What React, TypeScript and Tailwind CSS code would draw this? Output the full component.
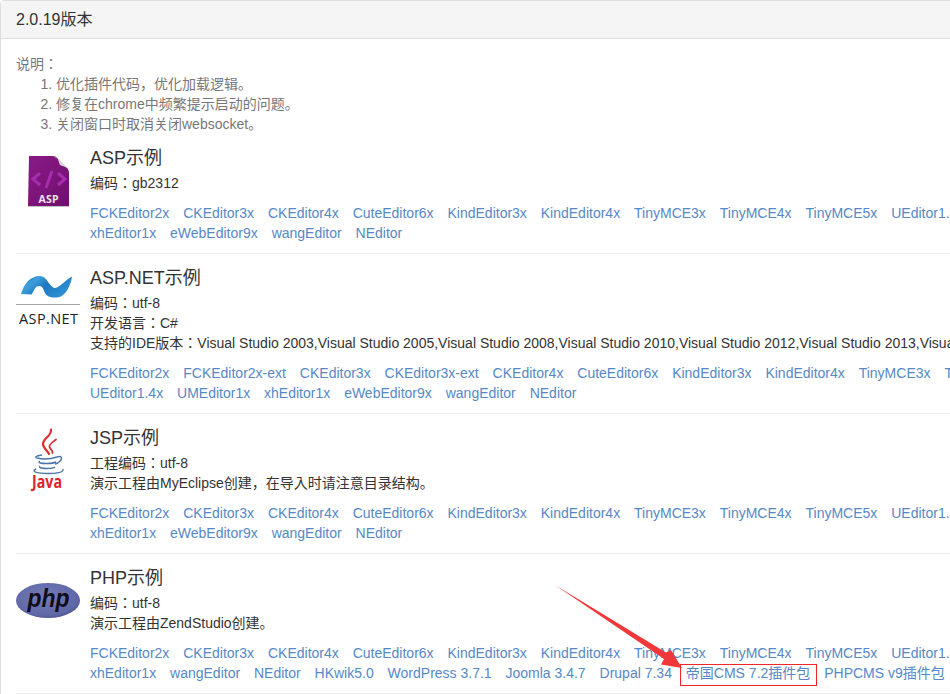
const base = ["FCKEditor2x", "CKEditor3x", "CKEditor4x", "CuteEditor6x", "KindEditor3x", "KindEditor4x", "TinyMCE3x", "TinyMCE4x", "TinyMCE5x", "UEditor1.4x"];

function AspLogo() {
  return (
    <svg viewBox="0 0 64 64" className="w-16 h-16">
      <defs>
        <linearGradient id="asp-bg" x1="0" y1="0" x2="1" y2="1">
          <stop offset="0" stopColor="#8a1a86" />
          <stop offset="1" stopColor="#6f0f6e" />
        </linearGradient>
      </defs>
      <path d="M12.500 57.500 L53.500 57.500 L53 59 L12 59 Z" fill="#c4c4c4" />
      <path d="M13 8 H37 C40 8 42 10 42.500 12 C43 15 44 16 46 17 C49 18 53 20 53 25 V58 H12 Z" fill="url(#asp-bg)" />
      <path d="M37 8 C41 9 46 13 52 21 C49 18 46 18 44 17 C43 15 43 12 42 11 Z" fill="#dcd6dc" />
      <path d="M24 25 L17 31 L24 37 M42 25 L49 31 L42 37" fill="none" stroke="#a62dac" strokeWidth="3" />
      <path d="M36 23 L30 40" fill="none" stroke="#a62dac" strokeWidth="3" />
      <text x="32.500" y="55" textAnchor="middle" fontFamily="'Open Sans', sans-serif" fontWeight="700" fontSize="10.500" fill="#efe3ef" textLength="20">ASP</text>
    </svg>
  );
}

function DotNetLogo() {
  return (
    <svg viewBox="0 0 64 64" className="w-16 h-16">
      <defs>
        <linearGradient id="net-bg" x1="0" y1="0" x2="1" y2="0.5">
          <stop offset="0" stopColor="#1a6fb5" />
          <stop offset="0.3" stopColor="#3f9fdc" />
          <stop offset="0.55" stopColor="#1c78c0" />
          <stop offset="1" stopColor="#2f8fd2" />
        </linearGradient>
      </defs>
      <path d="M5 26 C8 16 14 8 24 8 C31 8 32 17 38 20 C44 20 49 12 56 8.500 C55 16 50 29 41 29.500 C34 30 30 28 28.500 24 C27 20 26 18 23 18 C19 18 18 23 15.500 26.500 Z" fill="url(#net-bg)" />
      <rect x="0" y="36" width="64" height="1" fill="#a8a8a8" />
      <text x="32.500" y="56" textAnchor="middle" fontFamily="'Open Sans', sans-serif" fontSize="14.500" fill="#222" textLength="59">ASP.NET</text>
    </svg>
  );
}

function JavaLogo() {
  return (
    <svg viewBox="0 0 64 64" className="w-16 h-16">
      <g fill="none" stroke="#dc2f33" strokeLinecap="round">
        <path d="M35 1.500 C36 8 27 10 27 16 C27 20 31 22 33 26" strokeWidth="2.200" />
        <path d="M40 11.500 C37 14 33 16 33.500 19 C34 21 37 22 36.500 25" strokeWidth="1.800" />
      </g>
      <g fill="none" stroke="#4a76ad" strokeWidth="1.400">
        <path d="M26 27 C20 28 18 29 21 30 C27 31.500 35 31 41 29" />
        <path d="M24 33 C21 35 25 35.500 31 35.500 C35 35.500 38 35 40 34" />
        <path d="M24 38 C22 40 27 40.500 31 40.500 C35 40.500 38 40 39 39" />
        <path d="M41 29 C46 27 47 31 43 34 C42 35 40 36 39 36" />
        <path d="M20 41 C14 44 23 45.500 32 45.500 C40 45.500 48 44.500 47 41" />
      </g>
      <text x="31" y="60" textAnchor="middle" fontFamily="'Open Sans', sans-serif" fontWeight="700" fontSize="18" fill="#d8262c" textLength="30" lengthAdjust="spacingAndGlyphs">Java</text>
    </svg>
  );
}

function PhpLogo() {
  return (
    <svg viewBox="0 0 64 64" className="w-16 h-16">
      <defs>
        <radialGradient id="php-bg" cx="0.45" cy="0.4" r="0.7">
          <stop offset="0" stopColor="#767cb8" />
          <stop offset="0.75" stopColor="#5f67a6" />
          <stop offset="1" stopColor="#3f447c" />
        </radialGradient>
      </defs>
      <ellipse cx="32" cy="32.500" rx="32" ry="17.500" fill="url(#php-bg)" />
      <text x="32.500" y="39" textAnchor="middle" fontFamily="'Liberation Sans', sans-serif" fontStyle="italic" fontWeight="700" fontSize="26" fill="#0e0e18" textLength="42" lengthAdjust="spacingAndGlyphs">php</text>
    </svg>
  );
}

function EditorLinks({ items }: { items: string[] }) {
  return (
    <div className="flex flex-wrap gap-x-[13.9px] mt-[10px]">
      {items.map((item) => (
        <a key={item} href="#" className="relative whitespace-nowrap text-[#5688c6]">
          {item}
          {item === "帝国CMS 7.2插件包" && (
            <span className="absolute -left-[6px] -right-[7px] top-[1px] -bottom-[3px] border border-[#f0262a]" />
          )}
        </a>
      ))}
    </div>
  );
}

function Sample({
  logo,
  title,
  lines,
  links,
}: {
  logo: React.ReactNode;
  title: string;
  lines: string[];
  links: string[];
}) {
  return (
    <div className="flex pt-[14px] pb-[10px] border-b border-[#eeeeee]">
      <div className="w-16 mr-[10px] shrink-0">{logo}</div>
      <div className="min-w-0">
        <h4 className="text-[18px] leading-5 mb-[5px] text-[#333333]">{title}</h4>
        {lines.map((line) => (
          <p key={line} className="whitespace-nowrap">
            {line}
          </p>
        ))}
        <EditorLinks items={links} />
      </div>
    </div>
  );
}

export default function App() {
  return (
    <div className="relative w-[950px] h-[694px] overflow-hidden bg-white font-['Liberation_Sans','Noto_Sans_CJK_JP',sans-serif] text-sm leading-5 text-[#333333]">
      <div className="w-[1040px] border border-[#dddddd] rounded-tl-[4px]">
        {/* Panel heading */}
        <div className="h-[38px] px-[15px] flex items-center bg-[#f5f5f5] border-b border-[#dddddd] text-base">
          2.0.19版本
        </div>

        <div className="px-[15px] pt-[15px]">
          <div className="text-[#777777]">
            <div>说明：</div>
            <ol className="list-decimal pl-10">
              <li>优化插件代码，优化加载逻辑。</li>
              <li>修复在chrome中频繁提示启动的问题。</li>
              <li>关闭窗口时取消关闭websocket。</li>
            </ol>
          </div>

          <Sample
            logo={<AspLogo />}
            title="ASP示例"
            lines={["编码：gb2312"]}
            links={[...base, "xhEditor1x", "eWebEditor9x", "wangEditor", "NEditor"]}
          />
          <Sample
            logo={<DotNetLogo />}
            title="ASP.NET示例"
            lines={[
              "编码：utf-8",
              "开发语言：C#",
              "支持的IDE版本：Visual Studio 2003,Visual Studio 2005,Visual Studio 2008,Visual Studio 2010,Visual Studio 2012,Visual Studio 2013,Visual Studio 2015",
            ]}
            links={["FCKEditor2x", "FCKEditor2x-ext", "CKEditor3x", "CKEditor3x-ext", "CKEditor4x", "CuteEditor6x", "KindEditor3x", "KindEditor4x", "TinyMCE3x", "TinyMCE4x", "UEditor1.4x", "UMEditor1x", "xhEditor1x", "eWebEditor9x", "wangEditor", "NEditor"]}
          />
          <Sample
            logo={<JavaLogo />}
            title="JSP示例"
            lines={["工程编码：utf-8", "演示工程由MyEclipse创建，在导入时请注意目录结构。"]}
            links={[...base, "xhEditor1x", "eWebEditor9x", "wangEditor", "NEditor"]}
          />
          <Sample
            logo={<PhpLogo />}
            title="PHP示例"
            lines={["编码：utf-8", "演示工程由ZendStudio创建。"]}
            links={[...base, "xhEditor1x", "wangEditor", "NEditor", "HKwik5.0", "WordPress 3.7.1", "Joomla 3.4.7", "Drupal 7.34", "帝国CMS 7.2插件包", "PHPCMS v9插件包"]}
          />
        </div>
      </div>

      {/* Annotation arrow drawn over the screenshot */}
      <svg className="absolute inset-0 pointer-events-none" width="950" height="694" viewBox="0 0 950 694">
        <path d="M555 585 L666 652.500 L671 650 L682 668 L661 664.500 L664 659 Z" fill="#f0383a" />
      </svg>
    </div>
  );
}
